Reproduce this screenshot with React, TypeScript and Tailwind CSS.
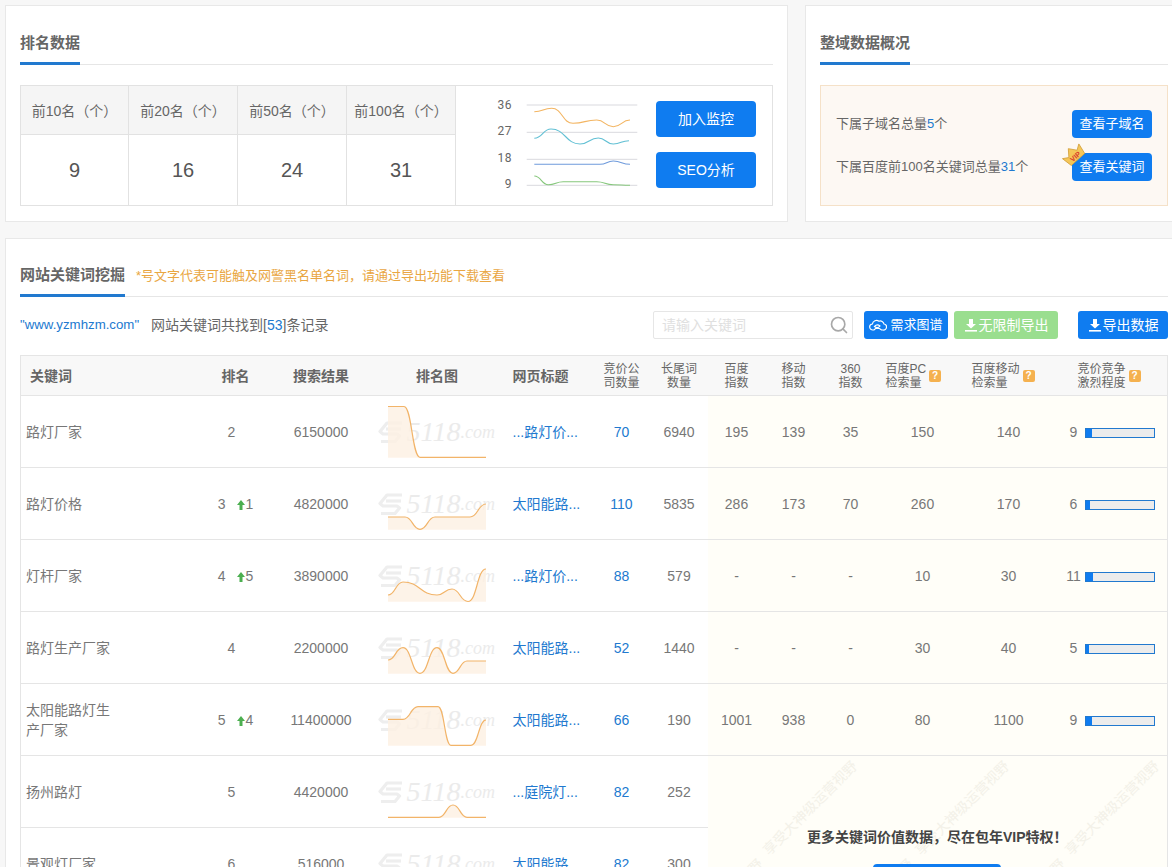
import { Search } from "lucide-react";

type Point = [number, number];

type Row = {
  keyword: string;
  rank: number;
  delta?: number;
  results: number;
  title: string;
  bidders: number;
  longTail: number;
  metrics?: (string | number)[];
  compete?: number;
  line: Point[];
};

const rows: Row[] = [
  { keyword: "路灯厂家", rank: 2, results: 6150000, title: "...路灯价...", bidders: 70, longTail: 6940, metrics: [195, 139, 35, 150, 140], compete: 9, line: [[0, 4.5], [16, 4.5], [32, 55.3], [98, 55.3]] },
  { keyword: "路灯价格", rank: 3, delta: 1, results: 4820000, title: "太阳能路...", bidders: 110, longTail: 5835, metrics: [286, 173, 70, 260, 170], compete: 6, line: [[0, 43], [17, 43], [32, 55.3], [47, 43], [82, 43], [98, 30]] },
  { keyword: "灯杆厂家", rank: 4, delta: 5, results: 3890000, title: "...路灯价...", bidders: 88, longTail: 579, metrics: ["-", "-", "-", 10, 30], compete: 11, line: [[0, 49], [15, 36], [49, 49], [64, 43], [80, 55.5], [98, 23]] },
  { keyword: "路灯生产厂家", rank: 4, results: 2200000, title: "太阳能路...", bidders: 52, longTail: 1440, metrics: ["-", "-", "-", 30, 40], compete: 5, line: [[0, 42], [15, 29.7], [32, 55.3], [49, 29.7], [65, 55.3], [79, 43], [98, 43]] },
  { keyword: "太阳能路灯生产厂家", rank: 5, delta: 4, results: 11400000, title: "太阳能路...", bidders: 66, longTail: 190, metrics: [1001, 938, 0, 80, 1100], compete: 9, line: [[0, 29.3], [15, 29.3], [30, 16.7], [50, 16.7], [63, 55.3], [83, 55.3], [98, 30]] },
  { keyword: "扬州路灯", rank: 5, results: 4420000, title: "...庭院灯...", bidders: 82, longTail: 252, line: [[0, 55.3], [51, 55.3], [65, 43], [79, 55.3], [98, 55.3]] },
  { keyword: "景观灯厂家", rank: 6, results: 516000, title: "太阳能路...", bidders: 82, longTail: 300, line: [[0, 55.3], [98, 55.3]] },
];

const stats = [
  { label: "前10名（个）", value: 9 },
  { label: "前20名（个）", value: 16 },
  { label: "前50名（个）", value: 24 },
  { label: "前100名（个）", value: 31 },
];

const watermarks = [
  "left-[39px] top-[44px]",
  "left-[191px] top-[44px]",
  "left-[341px] top-[44px]",
  "left-[-55px] top-[142px]",
  "left-[95px] top-[142px]",
  "left-[247px] top-[142px]",
  "left-[397px] top-[142px]",
];

// smooth line through the points, flat at every point
function curve(points: Point[]) {
  let d = `M${points[0][0]} ${points[0][1]}`;
  for (let i = 1; i < points.length; i++) {
    const [x0, y0] = points[i - 1];
    const [x1, y1] = points[i];
    const mid = (x0 + x1) / 2;
    d += ` C${mid} ${y0} ${mid} ${y1} ${x1} ${y1}`;
  }
  return d;
}

function PanelTitle({ title, width, children }: { title: string; width: string; children?: React.ReactNode }) {
  return (
    <div className="flex h-[43px] items-start border-b border-[#e6e6e6]">
      <div className={`-mb-px h-[43px] border-b-[3px] border-[#2179cf] pt-[11px] text-[15px] leading-[20px] font-bold text-[#666] ${width}`}>
        {title}
      </div>
      {children}
    </div>
  );
}

function RankChart() {
  const series: { color: string; points: Point[] }[] = [
    { color: "#f3b562", points: [[44.3, 16.7], [61.7, 13.3], [83, 28.3], [106.7, 25], [123.3, 31.7], [140, 25]] },
    { color: "#62c0d4", points: [[44.3, 43.3], [61, 34], [90, 49], [108.3, 43], [123.3, 49], [139, 45.7]] },
    { color: "#6f9bdc", points: [[44.3, 69.3], [110, 69.3], [123.3, 66], [140, 69.3]] },
    { color: "#86c77c", points: [[44.3, 81], [58.3, 89.7], [73.3, 86.7], [106.7, 86.7], [123.3, 89.7], [140, 90.3]] },
  ];
  const ticks = [
    { label: "36", grid: 10, y: 14 },
    { label: "27", grid: 37.3, y: 40 },
    { label: "18", grid: 64.3, y: 67 },
    { label: "9", grid: 90.3, y: 93 },
  ];
  return (
    <svg width="150" height="100" viewBox="0 0 150 100" className="ml-[34px] shrink-0">
      {ticks.map((t) => (
        <g key={t.label}>
          <line x1="36.7" x2="147.3" y1={t.grid} y2={t.grid} stroke="#d9d9de" strokeWidth="1" />
          <text x="22" y={t.y} textAnchor="end" fontSize="12" fill="#666" fontFamily="Roboto, sans-serif" letterSpacing="0.5">
            {t.label}
          </text>
        </g>
      ))}
      {series.map((s) => (
        <path key={s.color} d={curve(s.points)} fill="none" stroke={s.color} strokeWidth="1.1" />
      ))}
    </svg>
  );
}

function LogoMark() {
  return (
    <svg width="26" height="24" viewBox="0 0 26 24" fill="none" stroke="#eeeeee" strokeWidth="3.2" strokeLinejoin="round" className="shrink-0">
      <path d="M24 3H9L2 11.5l3 2.5h14l2.5 2L17 21.5H3" />
      <path d="M8 9h15" />
    </svg>
  );
}

function Watermark() {
  return (
    <div className="absolute top-1/2 left-[8px] flex -translate-y-1/2 items-center text-[#ebebeb] select-none">
      <LogoMark />
      <span className="ml-[3px] font-['Liberation_Serif',serif] text-[28px] leading-[26px] italic">5118</span>
      <span className="font-['Liberation_Serif',serif] text-[18px] leading-[26px] italic">.com</span>
    </div>
  );
}

function Sparkline({ points }: { points: Point[] }) {
  const line = curve(points);
  const end = points[points.length - 1][0];
  return (
    <svg width="98" height="60" viewBox="0 0 98 60" fill="none" className="relative">
      <path d={`${line} L${end} 55.8 L0 55.8 Z`} fill="#fdf0e2" fillOpacity="0.8" />
      <path d={line} stroke="#f2b469" strokeWidth="1.2" />
    </svg>
  );
}

function DownloadIcon() {
  return (
    <svg width="14" height="14" viewBox="0 0 14 14" fill="currentColor" className="shrink-0">
      <path d="M5 1h4v5h3L7 10.5 2 6h3z" />
      <rect x="1" y="12" width="12" height="1.6" />
    </svg>
  );
}

function CloudIcon() {
  return (
    <svg width="18" height="14" viewBox="0 0 18 14" fill="none" stroke="currentColor" strokeWidth="1.2" className="shrink-0">
      <path d="M5 12H4a3 3 0 0 1-.6-6A4.2 4.2 0 0 1 10 3.2 3.8 3.8 0 0 1 15 6a3 3 0 0 1-1 6h-1.500l-2-1.500H6.500z" />
      <path d="M5.500 8.500c1.700-1.900 3.500-2.100 5.500-.5-1.500 1.900-3.600 2-5.500.5z" />
    </svg>
  );
}

function VipBadge() {
  return (
    <svg width="24" height="24" viewBox="0 0 24 24" className="absolute top-[-10px] left-[-10px]">
      <g transform="rotate(-42 12 12)">
        <path d="M1 7l5.500 3.500L12 3.500l5.500 7L23 7l-2 11H3z" fill="#f5c658" stroke="#d3a03a" strokeWidth="0.8" />
        <text x="12" y="16.500" textAnchor="middle" fontSize="7" fontWeight="700" fill="#d8392b" fontFamily="Liberation Sans, sans-serif">
          VIP
        </text>
      </g>
    </svg>
  );
}

function Help() {
  return (
    <span className="ml-[3px] flex h-3 w-3 shrink-0 items-center justify-center rounded-[2px] bg-[#f5b14f] text-[10px] leading-none font-bold text-white">
      ?
    </span>
  );
}

function CompeteBar({ value }: { value: number }) {
  return (
    <div className="flex items-center pl-[11px]">
      <span className="w-[22px] text-center">{value}</span>
      <div className="h-[10px] w-[70px] border border-[#2179cf] bg-[#ececec]">
        <div className="h-full bg-[#0f7cf0]" style={{ width: `${value}%` }} />
      </div>
    </div>
  );
}

export default function App() {
  return (
    <div className="h-[867px] w-full overflow-hidden bg-[#f7f7f7] font-['Liberation_Sans','Noto_Sans_CJK_SC',sans-serif] text-[14px] text-[#666]">
      <div className="w-[1184px] pt-[5px] pl-[5px]">
        <div className="flex gap-[17px]">
          <section className="h-[217px] w-[783px] shrink-0 border border-[#e8e8e8] bg-white px-[14px] pt-[16px]">
            <PanelTitle title="排名数据" width="w-[60px]" />
            <div className="mt-[20px] flex h-[121px] border border-[#e2e2e2]">
              {stats.map((s) => (
                <div key={s.label} className="w-[109px] border-r border-[#e2e2e2] first:w-[108px]">
                  <div className="flex h-[49px] items-center justify-center border-b border-[#e2e2e2] bg-[#f5f5f5] pt-[2px] whitespace-nowrap">
                    {s.label}
                  </div>
                  <div className="flex h-[70px] items-center justify-center text-[20px] text-[#555]">{s.value}</div>
                </div>
              ))}
              <div className="flex flex-1 items-center pb-[2px]">
                <RankChart />
                <div className="ml-[16px] flex flex-col gap-[15px]">
                  <button className="h-9 w-[100px] rounded-[4px] bg-[#0f7cf0] text-white">加入监控</button>
                  <button className="h-9 w-[100px] rounded-[4px] bg-[#0f7cf0] text-white">SEO分析</button>
                </div>
              </div>
            </div>
          </section>

          <section className="h-[217px] w-[378px] shrink-0 border border-[#e8e8e8] bg-white px-[14px] pt-[16px]">
            <PanelTitle title="整域数据概况" width="w-[90px]" />
            <div className="mt-[20px] flex h-[121px] flex-col gap-[15px] border border-[#f5e1c8] bg-[#fdf8f3] px-[15px] pt-[24px] text-[13px]">
              <div className="flex items-center justify-between">
                <span>
                  下属子域名总量<span className="text-[#2179cf]">5</span>个
                </span>
                <button className="h-7 w-20 rounded-[4px] bg-[#0f7cf0] text-[13px] text-white">查看子域名</button>
              </div>
              <div className="flex items-center justify-between">
                <span>
                  下属百度前100名关键词总量<span className="text-[#2179cf]">31</span>个
                </span>
                <button className="relative h-7 w-20 rounded-[4px] bg-[#0f7cf0] text-[13px] text-white">
                  <VipBadge />
                  查看关键词
                </button>
              </div>
            </div>
          </section>
        </div>

        <section className="mt-[16px] w-[1178px] border border-[#e8e8e8] bg-white px-[14px] pt-[15px]">
          <PanelTitle title="网站关键词挖掘" width="w-[105px]">
            <span className="ml-[11px] pt-[12px] text-[13px] leading-[20px] whitespace-nowrap text-[#e9a642]">
              *号文字代表可能触及网警黑名单名词，请通过导出功能下载查看
            </span>
          </PanelTitle>

          <div className="mt-[14px] flex h-[28px] items-center">
            <span className="text-[13.25px] text-[#2179cf]">"www.yzmhzm.com"</span>
            <span className="ml-[12px]">
              网站关键词共找到[<span className="text-[#2179cf]">53</span>]条记录
            </span>
            <div className="ml-auto flex h-[28px] w-[200px] items-center justify-between rounded-[2px] border border-[#e6e6e6] pr-[3px] pl-[8px] text-[14px] text-[#e0e0e0]">
              请输入关键词
              <Search size={20} className="text-[#a8a8a8]" />
            </div>
            <button className="ml-[11px] flex h-[28px] w-[84px] items-center justify-center gap-[3px] rounded-[3px] bg-[#0f7cf0] text-[13px] text-white">
              <CloudIcon />
              需求图谱
            </button>
            <button className="ml-[6px] flex h-[28px] w-[104px] items-center justify-center gap-[1px] rounded-[3px] bg-[#9ade8f] text-white">
              <DownloadIcon />
              无限制导出
            </button>
            <button className="ml-[20px] flex h-[28px] w-[90px] items-center justify-center gap-[1px] rounded-[3px] bg-[#0f7cf0] text-white">
              <DownloadIcon />
              导出数据
            </button>
          </div>

          <table className="mt-[16px] w-[1148px] table-fixed border-collapse border border-[#e5e5e5] text-center text-[#777]">
            <colgroup>
              <col className="w-[170px]" />
              <col className="w-[82px]" />
              <col className="w-[97px]" />
              <col className="w-[135px]" />
              <col className="w-[88px]" />
              <col className="w-[58px]" />
              <col className="w-[57px]" />
              <col className="w-[58px]" />
              <col className="w-[56px]" />
              <col className="w-[58px]" />
              <col className="w-[86px]" />
              <col className="w-[86px]" />
              <col className="w-[116px]" />
            </colgroup>
            <thead>
              <tr className="h-[40px] border-b border-[#e5e5e5] bg-[#f8f8f8] text-[12px] leading-[14px] font-normal text-[#666]">
                <th className="pl-[9px] text-left text-[14px] font-bold">关键词</th>
                <th className="pl-[8px] text-[14px] font-bold">排名</th>
                <th className="text-[14px] font-bold">搜索结果</th>
                <th className="text-[14px] font-bold">排名图</th>
                <th className="pl-[8px] text-left text-[14px] font-bold">网页标题</th>
                <th className="font-normal">
                  竞价公
                  <br />
                  司数量
                </th>
                <th className="font-normal">
                  长尾词
                  <br />
                  数量
                </th>
                <th className="font-normal">
                  百度
                  <br />
                  指数
                </th>
                <th className="font-normal">
                  移动
                  <br />
                  指数
                </th>
                <th className="font-normal">
                  360
                  <br />
                  指数
                </th>
                <th className="pl-[6px] text-left font-normal">
                  <div className="flex items-center">
                    <span>
                      百度PC
                      <br />
                      检索量
                    </span>
                    <Help />
                  </div>
                </th>
                <th className="pl-[6px] text-left font-normal">
                  <div className="flex items-center">
                    <span>
                      百度移动
                      <br />
                      检索量
                    </span>
                    <Help />
                  </div>
                </th>
                <th className="pl-[26px] text-left font-normal">
                  <div className="flex items-center">
                    <span>
                      竞价竞争
                      <br />
                      激烈程度
                    </span>
                    <Help />
                  </div>
                </th>
              </tr>
            </thead>
            <tbody>
              {rows.map((row, i) => (
                <tr key={row.keyword} className="h-[72px] border-b border-[#e5e5e5]">
                  <td className="pl-[5px] text-left leading-[20px]">
                    <div className="w-[90px]">{row.keyword}</div>
                  </td>
                  <td className="pt-[2px]">
                    {row.delta ? (
                      <div className="flex items-center justify-center pl-[8px]">
                        <span>{row.rank}</span>
                        <svg width="8" height="10" viewBox="0 0 8 10" fill="#4caf50" className="mr-[1px] ml-[11px]">
                          <path d="M4 0l4 5H5.500v5h-3V5H0z" />
                        </svg>
                        <span>{row.delta}</span>
                      </div>
                    ) : (
                      row.rank
                    )}
                  </td>
                  <td className="pt-[2px]">{row.results}</td>
                  <td className="relative">
                    <Watermark />
                    <div className="flex items-center justify-center">
                      <Sparkline points={row.line} />
                    </div>
                  </td>
                  <td className="overflow-hidden pt-[2px] pl-[8px] text-left whitespace-nowrap text-[#2179cf]">{row.title}</td>
                  <td className="pt-[2px] text-[#2179cf]">{row.bidders}</td>
                  <td className="pt-[2px]">{row.longTail}</td>
                  {row.metrics &&
                    row.metrics.map((m, j) => (
                      <td key={j} className="bg-[#fffef8] pt-[2px]">
                        {m}
                      </td>
                    ))}
                  {row.compete !== undefined && (
                    <td className="bg-[#fffef8] pt-[2px]">
                      <CompeteBar value={row.compete} />
                    </td>
                  )}
                  {i === 5 && (
                    <td colSpan={6} rowSpan={2} className="bg-[#fffef8] align-top">
                      <div className="relative h-[143px] overflow-hidden pt-[71px]">
                        {watermarks.map((pos) => (
                          <span
                            key={pos}
                            className={`absolute -rotate-45 text-[14px] leading-[16px] whitespace-nowrap text-[#f3f1e8] select-none ${pos}`}
                          >
                            享受大神级运营视野
                          </span>
                        ))}
                        <div className="relative text-[14px] leading-[20px] font-bold text-[#444]">
                          更多关键词价值数据，尽在包年VIP特权！
                        </div>
                        <div className="relative mx-auto mt-[17px] h-9 w-[128px] rounded-[4px] bg-[#0f7cf0]" />
                      </div>
                    </td>
                  )}
                </tr>
              ))}
            </tbody>
          </table>
        </section>
      </div>
    </div>
  );
}
